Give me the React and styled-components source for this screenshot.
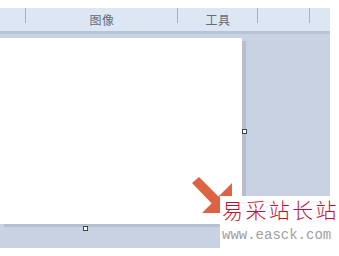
import React from 'react';
import styled, { createGlobalStyle } from 'styled-components';

const GlobalStyle = createGlobalStyle`
  html, body {
    margin: 0;
    padding: 0;
    background: #ffffff;
  }
  body {
    font-family: "Noto Sans CJK SC", "Noto Sans", sans-serif;
  }
`;

const Screen = styled.div`
  position: relative;
  width: 339px;
  height: 256px;
  overflow: hidden;
  background: #ffffff;
  padding-top: 8px;
  box-sizing: border-box;
`;

const Ribbon = styled.div`
  width: 330px;
  height: 23px;
  background: #dde6f3;
  display: flex;
`;

const Group = styled.div`
  position: relative;
  width: ${p => p.w}px;
  flex: none;
  display: flex;
  align-items: flex-start;
  justify-content: center;
  padding-top: 3px;
  box-sizing: border-box;

  &::after {
    content: '';
    display: ${p => (p.sep ? 'block' : 'none')};
    position: absolute;
    right: 0;
    top: 0;
    width: 1px;
    height: 15px;
    background: #a7b3c4;
  }
`;

const Label = styled.span`
  font-size: 12px;
  line-height: 17px;
  color: #666b73;
  letter-spacing: 0.5px;
`;

const Canvas = styled.div`
  width: 330px;
  height: 217px;
  background: #c8d2e2;
  border-top: 3px solid #b8c3d5;
  box-sizing: border-box;
  padding-top: 4px;
`;

const Page = styled.div`
  position: relative;
  width: 242px;
  height: 186px;
  background: #ffffff;
  box-shadow: 4px 3px 0 #b4bfd2;
`;

const Handle = styled.div`
  position: absolute;
  width: 3px;
  height: 3px;
  background: #ffffff;
  border: 1px solid #3c4450;
  left: ${p => p.x}px;
  top: ${p => p.y}px;
`;

const Arrow = styled.svg`
  position: absolute;
  left: 188px;
  top: 175px;
`;

const Watermark = styled.div`
  position: absolute;
  left: 220px;
  top: 196px;
  width: 119px;
  height: 60px;
  background: #ffffff;
  display: flex;
  flex-direction: column;
  align-items: flex-start;
  padding-left: 2px;
  box-sizing: border-box;
`;

const Brand = styled.div`
  font-family: "Noto Sans CJK SC", serif;
  font-size: 21px;
  font-weight: 300;
  line-height: 26px;
  color: #c3102f;
  letter-spacing: 2.4px;
  white-space: nowrap;
`;

const Site = styled.div`
  font-family: "Liberation Mono", "DejaVu Sans Mono", monospace;
  font-size: 14px;
  line-height: 18px;
  color: #a0a0a0;
  white-space: nowrap;
  margin-top: 4px;
`;

export default function App() {
  return (
    <>
      <GlobalStyle />
      <Screen>
        <Ribbon>
          <Group w={26} sep />
          <Group w={152} sep>
            <Label>图像</Label>
          </Group>
          <Group w={80} sep>
            <Label>工具</Label>
          </Group>
          <Group w={52} sep />
          <Group w={20} />
        </Ribbon>
        <Canvas>
          <Page>
            <Handle x={242} y={91} />
            <Handle x={83} y={188} />
          </Page>
        </Canvas>
        <Arrow width="50" height="42" viewBox="0 0 50 42">
          <polygon points="4,8 11,2 38,29 31,36" fill="#dd6443" />
          <polygon points="44,8 44,38 14,38" fill="#dd6443" />
        </Arrow>
        <Watermark>
          <Brand>易采站长站</Brand>
          <Site>www.easck.com</Site>
        </Watermark>
      </Screen>
    </>
  );
}
